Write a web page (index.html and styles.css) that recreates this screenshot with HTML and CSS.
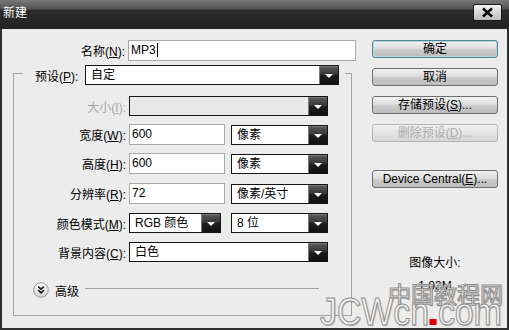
FILE: index.html
```html
<!DOCTYPE html>
<html lang="zh-CN">
<head>
  <meta charset="UTF-8">
  <meta name="viewport" content="width=device-width, initial-scale=1.0">
  <title>新建</title>
  <link rel="stylesheet" href="styles.css">
</head>
<body>
  <div class="dialog">
    <div class="titlebar">
      <span class="title">新建</span>
      <button class="close-button">
        <svg width="13" height="11" viewBox="0 0 13 11"><path d="M2 1.5 L11 9.5 M11 1.5 L2 9.5" stroke="#000" stroke-width="2.4" fill="none"/></svg>
      </button>
    </div>

    <div class="content">
      <div class="form">
        <div class="row name-row">
          <label class="label name-label">名称(<u>N</u>):</label>
          <div class="field name-field">MP3<span class="caret"></span></div>
        </div>

        <div class="group">
          <div class="legend">
            <label class="legend-label">预设(<u>P</u>):</label>
            <div class="select preset-select"><span class="select-text">自定</span><span class="arrow"></span></div>
          </div>

          <div class="row size-row">
            <label class="label disabled">大小(<u>I</u>):</label>
            <div class="select wide-select is-disabled"><span class="select-text"></span><span class="arrow"></span></div>
          </div>

          <div class="row input-row width-row">
            <label class="label">宽度(<u>W</u>):</label>
            <div class="field number-field">600</div>
            <div class="select unit-select"><span class="select-text">像素</span><span class="arrow"></span></div>
          </div>

          <div class="row input-row height-row">
            <label class="label">高度(<u>H</u>):</label>
            <div class="field number-field">600</div>
            <div class="select unit-select"><span class="select-text">像素</span><span class="arrow"></span></div>
          </div>

          <div class="row input-row res-row">
            <label class="label">分辨率(<u>R</u>):</label>
            <div class="field number-field">72</div>
            <div class="select unit-select"><span class="select-text">像素/英寸</span><span class="arrow"></span></div>
          </div>

          <div class="row color-row">
            <label class="label">颜色模式(<u>M</u>):</label>
            <div class="select mode-select"><span class="select-text">RGB 颜色</span><span class="arrow"></span></div>
            <div class="select unit-select bits-select"><span class="select-text">8 位</span><span class="arrow"></span></div>
          </div>

          <div class="row bg-row">
            <label class="label">背景内容(<u>C</u>):</label>
            <div class="select wide-select"><span class="select-text">白色</span><span class="arrow"></span></div>
          </div>

          <div class="advanced">
            <svg class="advanced-icon" width="16" height="16" viewBox="0 0 16 16">
              <defs>
                <linearGradient id="knob" x1="0" y1="0" x2="0" y2="1">
                  <stop offset="0" stop-color="#ffffff"/>
                  <stop offset="1" stop-color="#d4d4d4"/>
                </linearGradient>
              </defs>
              <circle cx="8" cy="8" r="7.3" fill="url(#knob)" stroke="#9a9a9a" stroke-width="1"/>
              <path d="M5.2 4.6 L8 7.2 L10.8 4.6 M5.2 8.2 L8 10.8 L10.8 8.2" stroke="#1a1a1a" stroke-width="1.6" fill="none"/>
            </svg>
            <span class="advanced-text">高级</span>
            <div class="advanced-line"></div>
          </div>
        </div>
      </div>

      <div class="buttons">
        <button class="button default-button">确定</button>
        <button class="button">取消</button>
        <button class="button">存储预设(<u>S</u>)...</button>
        <button class="button" disabled>删除预设(<u>D</u>)...</button>
        <button class="button device-button">Device Central(<u>E</u>)...</button>

        <div class="image-size">
          <div>图像大小:</div>
          <div class="image-size-value">1.03M</div>
        </div>
      </div>
    </div>

    <!-- 水印 -->
    <div class="wm-cn">中国教程网</div>
    <div class="wm-en">JCWcn<span class="wm-dot"></span>com</div>
  </div>
</body>
</html>
```

FILE: styles.css
```css
body {
  margin: 0;
  font-family: "Liberation Sans", "Noto Sans CJK SC", sans-serif;
  font-size: 12px;
  background-color: #ececec;
  color: #000;
}
.dialog {
  position: relative;
  width: 509px;
  height: 330px;
  overflow: hidden;
}
.titlebar {
  display: flex;
  justify-content: space-between;
  align-items: flex-start;
  height: 29px;
  padding: 0 7px 0 3px;
  box-sizing: border-box;
  background: linear-gradient(#787878, #525252 9px, #2c2c2c 10px, #232323);
}
.title {
  margin-top: 7px;
  line-height: 13px;
  font-size: 12px;
  color: #fff;
}
.close-button {
  display: flex;
  justify-content: center;
  align-items: center;
  width: 29px;
  height: 17px;
  margin-top: 4px;
  padding: 0;
  border: 1px solid #1a1a1a;
  border-radius: 2px;
  background: linear-gradient(#f4f4f4, #d6d6d6 50%, #bcbcbc);
}
.content {
  display: flex;
  height: 301px;
  box-sizing: border-box;
  padding-top: 11px;
  border: 2px solid #2e2e2e;
  border-top: 0;
  background-color: #ececec;
}
.form {
  width: 358px;
}
.row {
  display: flex;
  align-items: center;
  height: 20px;
}
.input-row {
  height: 21px;
}
.label {
  width: 112px;
  margin-right: 3px;
  text-align: right;
  white-space: nowrap;
}
.label.disabled {
  color: #a6a6a6;
}
.name-row {
  height: 21px;
}
.name-label {
  width: 123px;
}
.field {
  box-sizing: border-box;
  height: 21px;
  padding-left: 2px;
  border: 1px solid #a9a9a9;
  background: #fff;
  line-height: 19px;
}
.name-field {
  width: 228px;
}
.number-field {
  width: 96px;
  margin-right: 6px;
}
.caret {
  display: inline-block;
  width: 1px;
  height: 14px;
  margin-left: 1px;
  vertical-align: -3px;
  background: #000;
}
.group {
  width: 339px;
  height: 243px;
  margin: 12px 0 0 11px;
  box-sizing: border-box;
  border: 1px solid #a3a3a3;
}
.legend {
  display: flex;
  align-items: center;
  width: max-content;
  height: 20px;
  margin: -9px 0 0 9px;
  padding: 0 6px 0 12px;
  background-color: #ececec;
}
.legend-label {
  width: 47px;
  margin-right: 3px;
  white-space: nowrap;
}
.select {
  display: flex;
  box-sizing: border-box;
  height: 20px;
  border: 1px solid #141414;
  background: #fff;
}
.select-text {
  flex: 1;
  padding-left: 5px;
  line-height: 18px;
  white-space: nowrap;
}
.arrow {
  display: flex;
  justify-content: center;
  align-items: center;
  width: 19px;
  background: linear-gradient(#5e5e5e, #353535 45%, #1c1c1c 55%, #111);
  box-shadow: inset 1px 1px 0 #7a7a7a;
}
.arrow::after {
  content: "";
  margin-top: 2px;
  border-left: 4px solid transparent;
  border-right: 4px solid transparent;
  border-top: 4px solid #fff;
}
.preset-select {
  width: 254px;
}
.wide-select {
  width: 199px;
}
.select.is-disabled {
  background: #e8e8e8;
}
.unit-select {
  width: 97px;
}
.mode-select {
  width: 92px;
  margin-right: 10px;
}
.size-row {
  margin-top: 11px;
}
.width-row {
  margin-top: 8px;
}
.height-row {
  margin-top: 8px;
}
.res-row,
.color-row,
.bg-row {
  margin-top: 9px;
}
.advanced {
  display: flex;
  align-items: center;
  height: 18px;
  margin-top: 19px;
  padding-left: 19px;
}
.advanced-text {
  margin-left: 6px;
}
.advanced-line {
  flex: 1;
  height: 1px;
  margin: 0 32px 3px 6px;
  background: #a3a3a3;
}
.buttons {
  width: 126px;
  margin-left: 12px;
}
.button {
  display: block;
  box-sizing: border-box;
  width: 126px;
  height: 18px;
  margin-bottom: 10px;
  padding: 0;
  border: 1px solid #6e6e6e;
  border-radius: 3px;
  background: linear-gradient(#f2f2f2, #dedede 45%, #cacaca 55%, #bdbdbd);
  font-family: inherit;
  font-size: 12px;
  line-height: 16px;
  color: #000;
}
.default-button {
  border-color: #4f8798;
  box-shadow: inset 0 0 0 1px #b6d6df;
}
.button:disabled {
  border-color: #b4b4b4;
  background: linear-gradient(#f2f2f2, #e4e4e4 50%, #d6d6d6);
  color: #acacac;
}
.device-button {
  margin-top: 28px;
}
.image-size {
  margin-top: 68px;
  text-align: center;
  line-height: 14px;
}
.image-size-value {
  margin-top: 9px;
}
.wm-cn,
.wm-en {
  position: absolute;
  color: #f3f3f3;
  -webkit-text-stroke: 1px #8e8e8e;
  text-shadow: 1px 1px 1px rgba(0, 0, 0, 0.25);
  white-space: nowrap;
  pointer-events: none;
}
.wm-cn {
  left: 388px;
  top: 282px;
  font-family: "Noto Sans CJK SC", sans-serif;
  font-size: 23px;
  line-height: 23px;
}
.wm-en {
  left: 320px;
  top: 293px;
  font-family: "Liberation Sans", sans-serif;
  font-size: 38px;
  line-height: 38px;
  transform: scaleX(0.89);
  transform-origin: left top;
}
.wm-dot {
  display: inline-block;
  width: 8px;
  height: 6px;
  margin: 0 1px 0 1px;
  background: #e00000;
}
```
